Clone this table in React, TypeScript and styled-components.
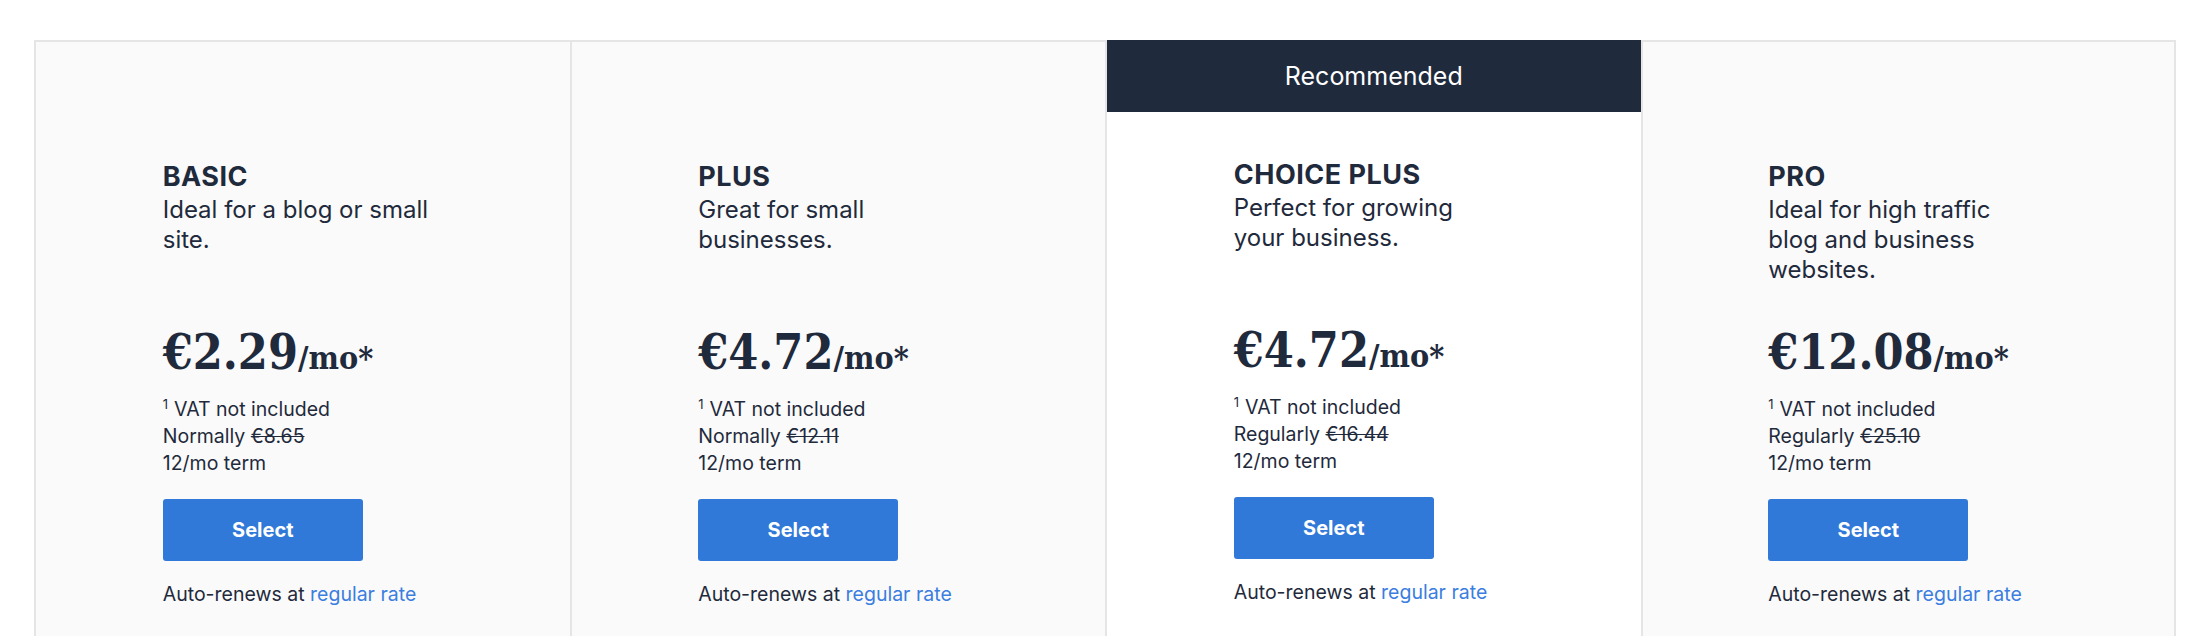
import React from "react";
import styled, { createGlobalStyle } from "styled-components";

const GlobalStyle = createGlobalStyle`
  html, body {
    margin: 0;
    padding: 0;
    background: #ffffff;
  }
  body {
    font-family: "Inter", "Open Sans", Arial, sans-serif;
    color: #1f2a3c;
    -webkit-font-smoothing: antialiased;
  }
`;

const Page = styled.div`
  padding: 40px 36px 0 34px;
  height: 636px;
  box-sizing: border-box;
  overflow: hidden;
`;

const Grid = styled.div`
  display: grid;
  grid-template-columns: repeat(4, 1fr);
  width: 2142px;
`;

const Column = styled.div<{ $featured?: boolean; $last?: boolean }>`
  display: flex;
  flex-direction: column;
  min-height: 620px;
  box-sizing: border-box;
  background: ${(p) => (p.$featured ? "#ffffff" : "#fafafa")};
  border-left: 2px solid #e5e5e5;
  border-top: ${(p) => (p.$featured ? "none" : "2px solid #e5e5e5")};
  border-right: ${(p) => (p.$last ? "2px solid #e5e5e5" : "none")};
`;

const Ribbon = styled.div`
  height: 72px;
  background: #1f2a3d;
  color: #ffffff;
  display: flex;
  align-items: center;
  justify-content: center;
  font-size: 25px;
  font-weight: 400;
`;

const Body = styled.div<{ $featured?: boolean }>`
  width: 280px;
  margin: 0 auto;
  padding-top: ${(p) => (p.$featured ? "47px" : "119px")};
  display: flex;
  flex-direction: column;
`;

const Intro = styled.div`
  min-height: 166px;
`;

const Title = styled.h2`
  margin: 0;
  font-size: 27px;
  line-height: 32px;
  font-weight: 700;
  letter-spacing: 0.5px;
  color: #1f2a3c;
`;

const Description = styled.p`
  margin: 2px 0 0;
  max-width: 274px;
  font-size: 24px;
  line-height: 30px;
  font-weight: 400;
  color: #1f2a3c;
`;

const Price = styled.div`
  font-family: "DejaVu Serif", "Liberation Serif", serif;
  font-stretch: condensed;
  font-weight: 700;
  font-size: 48px;
  line-height: 51px;
  letter-spacing: 0;
  color: #1f2a3c;
  white-space: nowrap;
`;

const Per = styled.span`
  font-size: 32px;
  line-height: 1;
`;

const Details = styled.div`
  margin-top: 18px;
  font-size: 19.5px;
  line-height: 27px;
  color: #1f2a3c;
`;

const Line = styled.div`
  white-space: nowrap;
`;

const Sup = styled.sup`
  font-size: 13px;
  line-height: 0;
  margin-right: 6px;
  vertical-align: 7px;
`;

const Struck = styled.s`
  text-decoration: line-through;
`;

const SelectButton = styled.button`
  margin-top: 22px;
  width: 200px;
  height: 62px;
  border: none;
  border-radius: 3px;
  background: #3179d8;
  color: #ffffff;
  font-family: inherit;
  font-size: 20px;
  font-weight: 700;
  cursor: pointer;
`;

const Renew = styled.div`
  margin-top: 20px;
  font-size: 19.5px;
  line-height: 27px;
  color: #1f2a3c;
  white-space: nowrap;
`;

const RateLink = styled.a`
  color: #3a7ee0;
  text-decoration: none;
`;

type Plan = {
  name: string;
  desc: string;
  price: string;
  label: string;
  was: string;
  featured?: boolean;
};

const plans: Plan[] = [
  { name: "BASIC", desc: "Ideal for a blog or small site.", price: "€2.29", label: "Normally", was: "€8.65" },
  { name: "PLUS", desc: "Great for small businesses.", price: "€4.72", label: "Normally", was: "€12.11" },
  { name: "CHOICE PLUS", desc: "Perfect for growing your business.", price: "€4.72", label: "Regularly", was: "€16.44", featured: true },
  { name: "PRO", desc: "Ideal for high traffic blog and business websites.", price: "€12.08", label: "Regularly", was: "€25.10" },
];

export default function App() {
  return (
    <>
      <GlobalStyle />
      <Page>
        <Grid>
          {plans.map((p, i) => (
            <Column key={p.name} $featured={p.featured} $last={i === plans.length - 1}>
              {p.featured && <Ribbon>Recommended</Ribbon>}
              <Body $featured={p.featured}>
                <Intro>
                  <Title>{p.name}</Title>
                  <Description>{p.desc}</Description>
                </Intro>
                <Price>
                  {p.price}
                  <Per>/mo*</Per>
                </Price>
                <Details>
                  <Line>
                    <Sup>1</Sup>VAT not included
                  </Line>
                  <Line>
                    {p.label} <Struck>{p.was}</Struck>
                  </Line>
                  <Line>12/mo term</Line>
                </Details>
                <div>
                  <SelectButton>Select</SelectButton>
                </div>
                <Renew>
                  Auto-renews at <RateLink href="#">regular rate</RateLink>
                </Renew>
              </Body>
            </Column>
          ))}
        </Grid>
      </Page>
    </>
  );
}
